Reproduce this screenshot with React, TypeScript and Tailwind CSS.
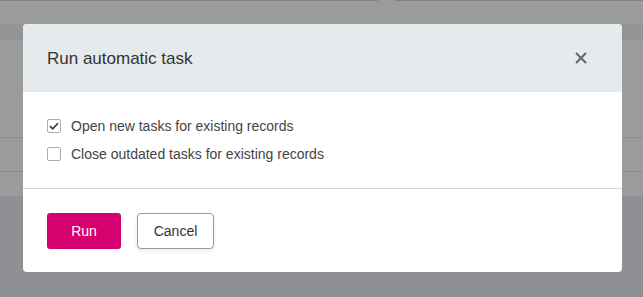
import { useState } from "react";

const options = [
  { id: "open", label: "Open new tasks for existing records", checked: true },
  { id: "close", label: "Close outdated tasks for existing records", checked: false },
];

const CheckIcon = () => (
  <svg width="10" height="8" viewBox="0 0 10 8" fill="none">
    <path d="M1 4.2 L3.7 6.8 L9 1.2" stroke="#333" strokeWidth="1.6" />
  </svg>
);

const CloseIcon = () => (
  <svg width="12" height="12" viewBox="0 0 12 12" fill="none">
    <path d="M1 1 L11 11 M11 1 L1 11" stroke="#63676b" strokeWidth="2" />
  </svg>
);

export default function App() {
  const [checked, setChecked] = useState<Record<string, boolean>>(
    Object.fromEntries(options.map((o) => [o.id, o.checked]))
  );

  return (
    <div className="relative w-[643px] h-[297px] overflow-hidden bg-[#8f9094] font-['Liberation_Sans',Arial,sans-serif]">
      {/* dimmed page behind */}
      <div className="flex h-px">
        <div className="w-[378px] bg-[#7f8186]" />
        <div className="w-[17px] bg-[#9b9b9c]" />
        <div className="flex-1 bg-[#7f8186]" />
      </div>
      <div className="h-[23px] bg-[#9b9b9c]" />
      <div className="h-[16px] bg-[#939497] border-b border-[#909195]" />
      <div className="flex flex-col h-[156px] bg-[#9b9b9c]">
        <div className="h-[98px] border-b border-[#898b8f]" />
        <div className="h-[34px] border-b border-[#898b8f]" />
      </div>

      {/* modal */}
      <div className="absolute left-[23px] top-[24px] w-[599px] h-[248px] rounded-[4px] bg-white overflow-hidden flex flex-col">
        <div className="h-[68px] bg-[#e5eaed] flex items-center justify-between pl-[24px] pr-[35px]">
          <h2 className="text-[17px] text-[#333] leading-none">Run automatic task</h2>
          <button className="flex items-center justify-center">
            <CloseIcon />
          </button>
        </div>
        <div className="flex flex-col gap-[14px] pl-[24px] pt-[27px] h-[97px] border-b border-[#cfd9de]">
          {options.map((o) => (
            <label key={o.id} className="flex items-center gap-[10px] cursor-pointer">
              <span
                className="w-[14px] h-[14px] border border-[#a9adb1] rounded-[2px] flex items-center justify-center bg-white"
                onClick={() => setChecked({ ...checked, [o.id]: !checked[o.id] })}
              >
                {checked[o.id] && <CheckIcon />}
              </span>
              <span className="text-[14px] text-[#444] leading-none">{o.label}</span>
            </label>
          ))}
        </div>
        <div className="flex gap-[16px] pl-[24px] pt-[24px]">
          <button className="w-[74px] h-[36px] rounded-[3px] bg-[#d6006e] text-white text-[14px]">Run</button>
          <button className="w-[77px] h-[36px] rounded-[4px] bg-white border border-[#8c9eaa] text-[#333] text-[14px] shadow-[0_2px_4px_rgba(0,0,0,0.08)]">
            Cancel
          </button>
        </div>
      </div>
    </div>
  );
}
